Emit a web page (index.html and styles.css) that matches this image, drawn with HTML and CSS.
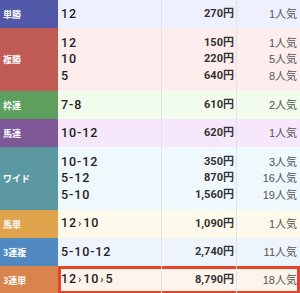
FILE: index.html
```html
<!DOCTYPE html>
<html lang="ja">
<head>
<meta charset="utf-8">
<link rel="stylesheet" href="styles.css">
</head>
<body>
<div class="table">
  <div class="row tansho">
    <div class="label">単勝</div>
    <div class="body">
      <div class="col combo"><span>12</span></div>
      <div class="col pay"><span>270円</span></div>
      <div class="col pop"><span>1人気</span></div>
    </div>
  </div>
  <div class="row fukusho tall">
    <div class="label">複勝</div>
    <div class="body">
      <div class="col combo"><span>12</span><span>10</span><span>5</span></div>
      <div class="col pay"><span>150円</span><span>220円</span><span>640円</span></div>
      <div class="col pop"><span>1人気</span><span>5人気</span><span>8人気</span></div>
    </div>
  </div>
  <div class="row wakuren">
    <div class="label">枠連</div>
    <div class="body">
      <div class="col combo"><span>7-8</span></div>
      <div class="col pay"><span>610円</span></div>
      <div class="col pop"><span>2人気</span></div>
    </div>
  </div>
  <div class="row umaren">
    <div class="label">馬連</div>
    <div class="body">
      <div class="col combo"><span>10-12</span></div>
      <div class="col pay"><span>620円</span></div>
      <div class="col pop"><span>1人気</span></div>
    </div>
  </div>
  <div class="row wide tall">
    <div class="label">ワイド</div>
    <div class="body">
      <div class="col combo"><span>10-12</span><span>5-12</span><span>5-10</span></div>
      <div class="col pay"><span>350円</span><span>870円</span><span>1,560円</span></div>
      <div class="col pop"><span>3人気</span><span>16人気</span><span>19人気</span></div>
    </div>
  </div>
  <div class="row umatan">
    <div class="label">馬単</div>
    <div class="body">
      <div class="col combo"><span>12<i class="arr">›</i>10</span></div>
      <div class="col pay"><span>1,090円</span></div>
      <div class="col pop"><span>1人気</span></div>
    </div>
  </div>
  <div class="row sanrenpuku">
    <div class="label">3連複</div>
    <div class="body">
      <div class="col combo"><span>5-10-12</span></div>
      <div class="col pay"><span>2,740円</span></div>
      <div class="col pop"><span>11人気</span></div>
    </div>
  </div>
  <div class="row sanrentan hit">
    <div class="label">3連単</div>
    <div class="body">
      <div class="col combo"><span>12<i class="arr">›</i>10<i class="arr">›</i>5</span></div>
      <div class="col pay"><span>8,790円</span></div>
      <div class="col pop"><span>18人気</span></div>
    </div>
  </div>
</div>
</body>
</html>
```

FILE: styles.css
```css
html, body {
  margin: 0;
  padding: 0;
  background: #fff;
}
body {
  font-family: "Liberation Sans", "Noto Sans CJK JP", sans-serif;
  width: 300px;
  overflow: hidden;
}
.table {
  display: flex;
  flex-direction: column;
}
.row {
  display: grid;
  grid-template-columns: 58px 1fr;
  height: 28px;
}
.row.tall {
  height: 63px;
}
.label {
  display: flex;
  align-items: center;
  padding-left: 3px;
  color: #fff;
  font-family: "Noto Sans CJK JP", sans-serif;
  font-weight: 700;
  font-size: 9px;
}
.body {
  display: grid;
  grid-template-columns: 103px 75px 1fr;
}
.col {
  display: flex;
  flex-direction: column;
  justify-content: center;
  line-height: 16.5px;
}
.col + .col {
  border-left: 1px solid #e3e3e3;
}
.combo {
  padding-left: 3px;
  font-family: Roboto, "Liberation Sans", sans-serif;
  font-size: 12.5px;
  font-weight: 500;
  letter-spacing: 0.9px;
  color: #222;
}
.arr {
  font-style: normal;
  font-weight: 400;
  font-size: 11px;
  margin: 0 1px;
}
.pay {
  align-items: flex-end;
  padding-right: 2px;
  font-family: Roboto, "Noto Sans CJK JP", sans-serif;
  font-size: 11px;
  font-weight: 700;
  color: #333;
}
.pop {
  align-items: flex-end;
  padding-right: 3px;
  font-size: 11px;
  color: #555;
}
.tansho .label { background: #5158a8; }
.tansho .body { background: #eef0fd; }
.fukusho .label { background: #bf5a55; }
.fukusho .body { background: #fdeeed; }
.wakuren .label { background: #5e9f5d; }
.wakuren .body { background: #f1fced; }
.umaren .label { background: #7d5796; }
.umaren .body { background: #f6e8fa; }
.wide .label { background: #5b98a2; }
.wide .body { background: #eef8fd; }
.umatan .label { background: #dfa34c; }
.umatan .body { background: #fefaeb; }
.sanrenpuku .label { background: #4f89bf; }
.sanrenpuku .body { background: #eef4fb; }
.sanrentan .label { background: #d9844c; }
.sanrentan .body { background: #fdf4ec; }
.hit .body {
  box-shadow: inset 0 0 0 3px #e8412c;
}
```
